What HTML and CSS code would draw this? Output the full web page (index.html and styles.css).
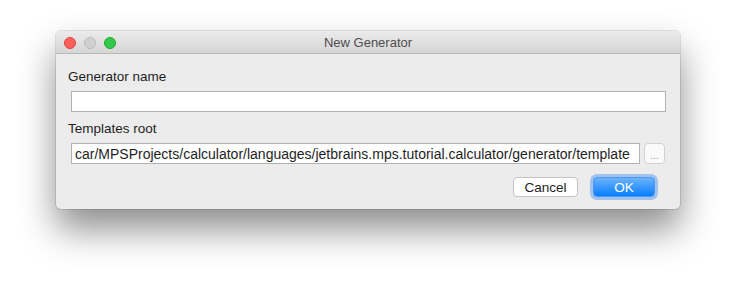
FILE: index.html
```html
<!DOCTYPE html>
<html lang="en">
<head>
    <meta charset="UTF-8">
    <title>New Generator</title>
    <link rel="stylesheet" href="styles.css">
</head>
<body>

    <div id="desktop">
        <div id="window">
            <div class="titlebar">
                <div class="lights">
                    <span class="light red"></span>
                    <span class="light gray"></span>
                    <span class="light green"></span>
                </div>
                <div class="title">New Generator</div>
            </div>

            <div class="content">
                <p class="label">Generator name</p>
                <div class="row wide">
                    <input type="text" class="field">
                </div>

                <p class="label">Templates root</p>
                <div class="row">
                    <input type="text" class="field path" value="car/MPSProjects/calculator/languages/jetbrains.mps.tutorial.calculator/generator/template">
                    <button class="browse">...</button>
                </div>

                <div class="buttons">
                    <button class="btn cancel">Cancel</button>
                    <button class="btn ok">OK</button>
                </div>
            </div>
        </div>
    </div>

</body>
</html>
```

FILE: styles.css
```css
* {
    margin: 0;
    padding: 0;
    box-sizing: border-box;
}

html,
body {
    height: 100%;
}

body {
    background-color: #fff;
    font-family: "Liberation Sans", Arial, sans-serif;
    font-size: 13.5px;
    color: #1e1e1e;
}

#desktop {
    height: 289px;
    padding: 31px 0 0 56px;
    background-color: #fff;
}

#window {
    width: 624px;
    height: 178px;
    background-color: #ececec;
    border-radius: 5px;
    box-shadow: 0 0 0 1px rgba(0, 0, 0, .1), 0 20px 36px rgba(0, 0, 0, .45);
    overflow: hidden;
}

.titlebar {
    position: relative;
    height: 23px;
    background-image: linear-gradient(#ebebeb, #d6d6d6);
    border-bottom: 1px solid #b9b9b9;
}

.lights {
    display: flex;
    gap: 8px;
    padding: 6px 0 0 8px;
}
.light {
    width: 12px;
    height: 12px;
    border-radius: 50%;
}
.red {
    background-color: #fc605c;
    border: 1px solid #e0443e;
}
.gray {
    background-color: #d0d0d0;
    border: 1px solid #bcbcbc;
}
.green {
    background-color: #34c84a;
    border: 1px solid #1dad2b;
}

.title {
    position: absolute;
    top: 0;
    left: 0;
    right: 0;
    line-height: 23px;
    font-size: 13px;
    text-align: center;
    color: #4d4d4d;
}

.content {
    padding: 15px 15px 0 12px;
}

.label {
    line-height: 16px;
    margin-bottom: 6px;
}

.row {
    display: flex;
    gap: 4px;
    padding-left: 3px;
    margin-bottom: 9px;
}
.row.wide {
    margin-right: -1px;
}

.field {
    flex-grow: 1;
    width: 0;
    height: 21px;
    padding: 0 3px;
    font-family: inherit;
    font-size: 14px;
    color: #1e1e1e;
    background-color: #fff;
    border: 1px solid #b2b2b2;
    outline: none;
}

.browse {
    width: 21px;
    height: 21px;
    padding-top: 4px;
    font-family: inherit;
    font-size: 10px;
    line-height: 16px;
    color: #a0a0a0;
    background-color: #fafafa;
    border: 1px solid #d2d2d2;
    border-radius: 4px;
}

.buttons {
    display: flex;
    justify-content: flex-end;
    gap: 15px;
    padding: 4px 10px 0 0;
}

.btn {
    height: 20px;
    font-family: inherit;
    font-size: 13.5px;
    border-radius: 4px;
}
.cancel {
    width: 65px;
    color: #1e1e1e;
    background-color: #fff;
    border: 1px solid #c3c3c3;
}
.ok {
    width: 62px;
    color: #fff;
    background-image: linear-gradient(#6cb3fa, #087eff);
    border: 1px solid #4a98f0;
    box-shadow: 0 0 0 3px rgba(100, 160, 240, .55);
}
```
